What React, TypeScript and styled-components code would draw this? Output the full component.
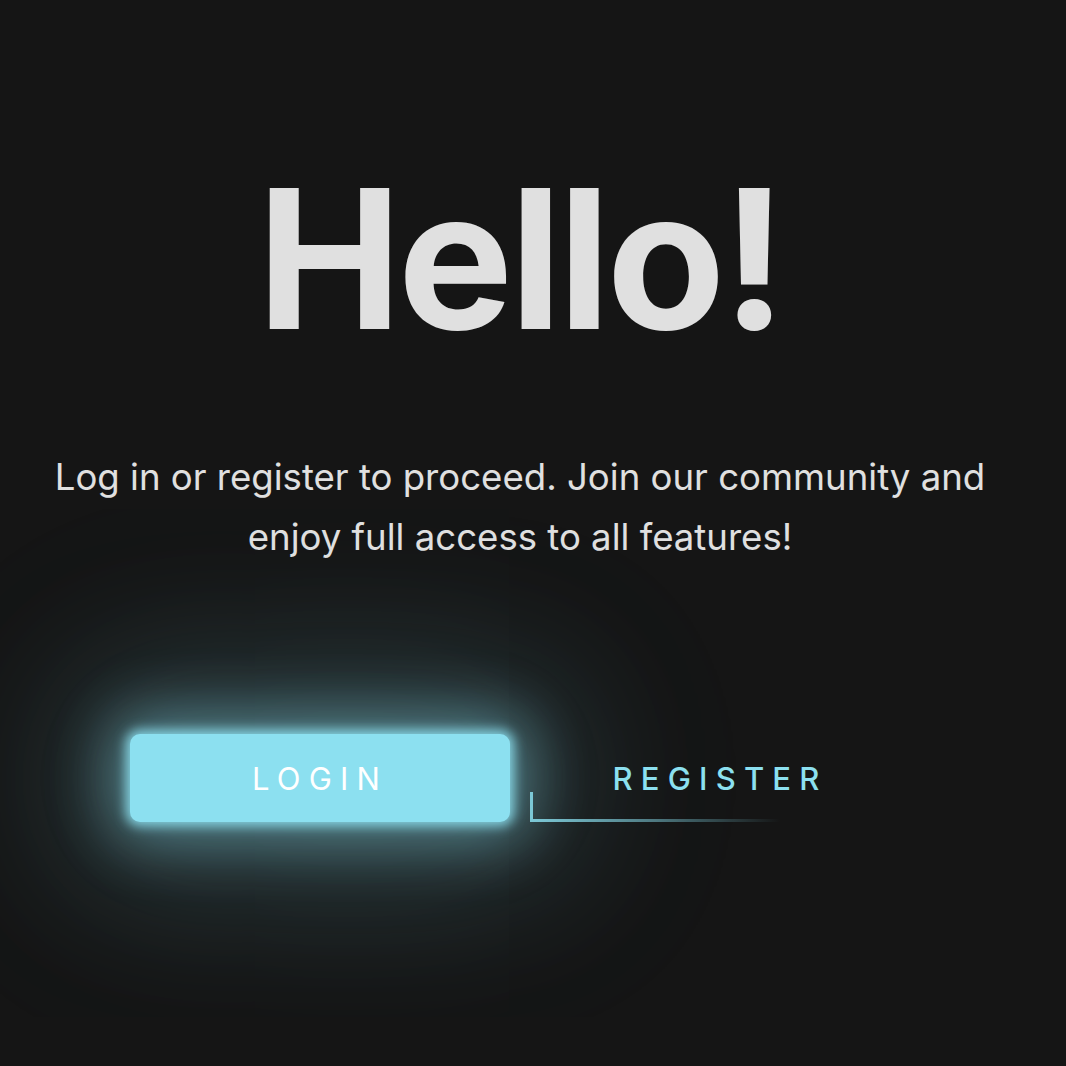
import React from "react";
import styled, { createGlobalStyle } from "styled-components";

const Global = createGlobalStyle`
  html, body { margin: 0; padding: 0; background: #151515; }
  body { font-family: Inter, "Noto Sans", sans-serif; }
`;

const Page = styled.main`
  width: 1040px;
  min-height: 1066px;
  display: flex;
  flex-direction: column;
  align-items: center;
  padding-top: 162px;
  box-sizing: border-box;
`;

const Title = styled.h1`
  margin: 0;
  font-family: Inter, sans-serif;
  font-weight: 700;
  font-size: 194px;
  line-height: 1;
  letter-spacing: -4px;
  color: #e0e0e0;
`;

const Lead = styled.p`
  margin: 91px 0 0;
  font-family: Inter, sans-serif;
  font-weight: 400;
  font-size: 36.6px;
  line-height: 60px;
  color: #e0e0e0;
  text-align: center;
  max-width: 980px;
`;

const Actions = styled.div`
  margin-top: 167px;
  display: flex;
  gap: 20px;
`;

const Button = styled.button<{ $primary?: boolean }>`
  position: relative;
  width: 380px;
  height: 88px;
  border: none;
  border-radius: 10px;
  font-family: Inter, sans-serif;
  font-size: 31px;
  letter-spacing: 8.2px;
  padding: 0;
  cursor: pointer;
  background: ${(p) => (p.$primary ? "#8ce0f0" : "transparent")};
  color: ${(p) => (p.$primary ? "#ffffff" : "#8ce0f0")};
  font-weight: ${(p) => (p.$primary ? 400 : 500)};
  box-shadow: ${(p) =>
    p.$primary
      ? "0 0 12px 4px rgba(140,224,240,0.9), 0 0 60px 20px rgba(140,224,240,0.45), 0 0 160px 50px rgba(140,224,240,0.2), 0 0 260px 70px rgba(140,224,240,0.06)"
      : "none"};
`;

const RegisterButton = styled(Button)`
  &::before {
    content: "";
    position: absolute;
    left: 0;
    bottom: 0;
    width: 3px;
    height: 30px;
    background: #7cc8d6;
  }
  &::after {
    content: "";
    position: absolute;
    left: 0;
    bottom: 0;
    width: 250px;
    height: 3px;
    background: linear-gradient(90deg, #7cc8d6 0%, rgba(124, 200, 214, 0.55) 50%, rgba(124, 200, 214, 0) 100%);
  }
`;

export default function App() {
  return (
    <>
      <Global />
      <Page>
        <Title>Hello!</Title>
        <Lead>
          Log in or register to proceed. Join our community and enjoy full access to all features!
        </Lead>
        <Actions>
          <Button $primary>LOGIN</Button>
          <RegisterButton>REGISTER</RegisterButton>
        </Actions>
      </Page>
    </>
  );
}
